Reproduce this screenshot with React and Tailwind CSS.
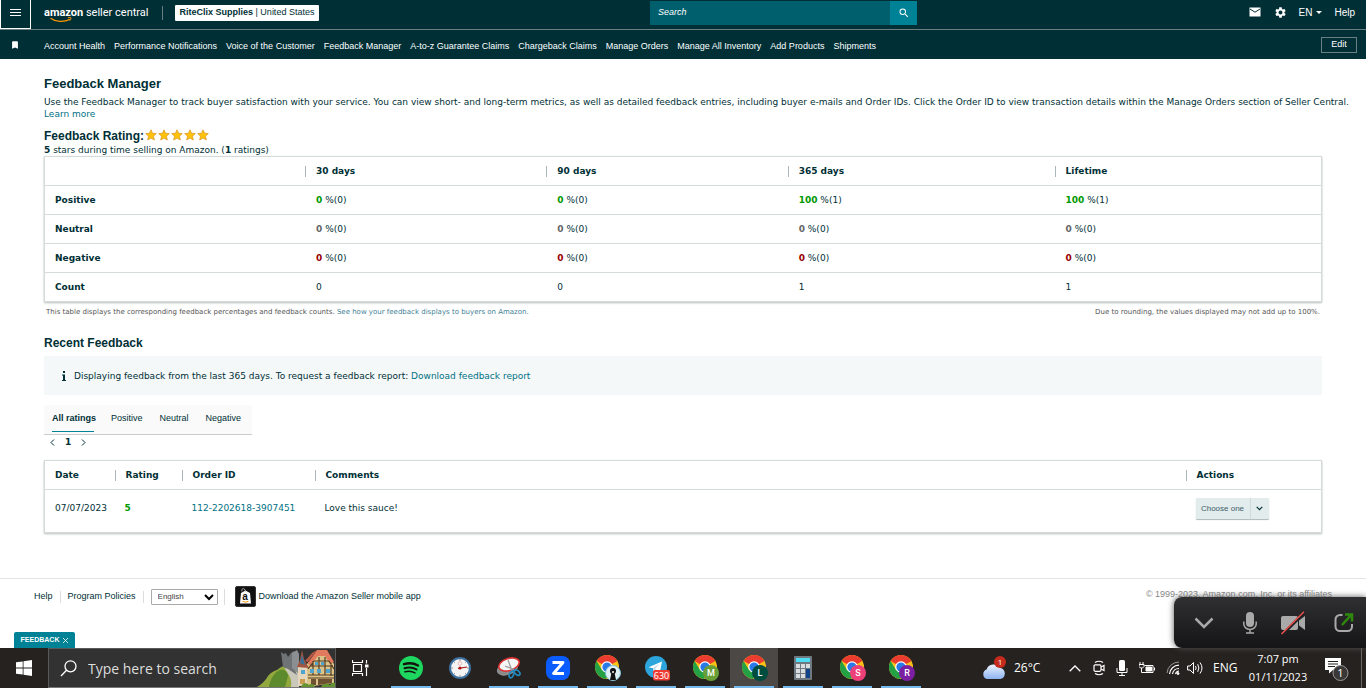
import { useState } from "react";
import { MdSettings, MdSearch, MdBookmark } from "react-icons/md";

const navLinks = [
  "Account Health",
  "Performance Notifications",
  "Voice of the Customer",
  "Feedback Manager",
  "A-to-z Guarantee Claims",
  "Chargeback Claims",
  "Manage Orders",
  "Manage All Inventory",
  "Add Products",
  "Shipments",
];

const periods = ["30 days", "90 days", "365 days", "Lifetime"];

const ratingRows = [
  { name: "Positive", color: "text-[#009900]", values: [[0, 0], [0, 0], [100, 1], [100, 1]] },
  { name: "Neutral", color: "text-[#666666]", values: [[0, 0], [0, 0], [0, 0], [0, 0]] },
  { name: "Negative", color: "text-[#990000]", values: [[0, 0], [0, 0], [0, 0], [0, 0]] },
];

const counts = [0, 0, 1, 1];
const tabs = ["All ratings", "Positive", "Neutral", "Negative"];

function Star() {
  return (
    <svg width="12" height="12" viewBox="0 0 12 12">
      <path
        d="M6 .8l1.500 3.400 3.800.4-2.800 2.600.8 3.800L6 9.100 2.700 11l.8-3.800L.7 4.600l3.800-.4z"
        fill="#ffc20a"
        stroke="#dd9c2a"
        strokeWidth=".8"
        strokeLinejoin="round"
      />
    </svg>
  );
}

function Header() {
  return (
    <header className="bg-[#002f36] text-white text-[9px]">
      <div className="flex h-[30px] items-start border-b border-[#6b7f83]">
        <button
          aria-label="Menu"
          className="flex h-[29px] w-[31px] shrink-0 items-center justify-center border border-t-0 border-white pb-[3px]"
        >
          <svg width="11" height="8" viewBox="0 0 11 8" stroke="#fff" strokeWidth="1">
            <path d="M0 .5h11M0 3.500h11M0 6.500h11" />
          </svg>
        </button>
        <a href="#" className="ml-[13px] flex h-[25px] flex-col pt-[5px] font-['Roboto',sans-serif] text-[11px] leading-[15px]">
          <span className="whitespace-nowrap">
            <b>amazon</b> seller central
          </span>
          <svg width="24" height="6" viewBox="0 0 24 6" className="-mt-[3px] ml-[6px]" fill="none" stroke="#ff9900">
            <path d="M.5 1.200C6 5.200 14 5.400 20 2.200" strokeWidth="1.300" />
            <path d="M18 .7c2-.5 3.400-.2 3 .5s-.5 1.800-1.200 2.500" strokeWidth="1" />
          </svg>
        </a>
        <span className="mt-[6px] ml-[13px] h-[14px] w-px bg-[#6b7f83]" />
        <button className="mt-[5px] ml-3 h-4 whitespace-nowrap rounded-[1px] bg-white px-[5px] text-[9px] text-[#002f36]">
          <b>RiteClix Supplies</b> | United States
        </button>
        <form className="mt-px ml-auto flex h-6 w-[267px] shrink-0">
          <input
            aria-label="Search"
            placeholder="Search"
            className="min-w-0 flex-1 bg-[#005f6d] px-2 text-[9px] italic text-white placeholder:text-white"
          />
          <button type="button" aria-label="Submit search" className="flex w-[27px] items-center justify-center bg-[#008296]">
            <MdSearch size={12} />
          </button>
        </form>
        <div className="flex h-6 w-[449px] items-center justify-end pr-[11px] text-[10px]">
          <button aria-label="Messages">
            <svg width="12" height="10" viewBox="0 0 12 10">
              <path d="M.5 .5h11v9H.5z" fill="#fff" />
              <path d="M1 2l5 3.200L11 2" fill="none" stroke="#002f36" strokeWidth="1" />
            </svg>
          </button>
          <button aria-label="Settings" className="ml-[13px]">
            <MdSettings size={13} />
          </button>
          <button className="ml-3 flex items-center gap-1">
            EN
            <svg width="6" height="3" viewBox="0 0 6 3" fill="#fff">
              <path d="M0 0h6L3 3z" />
            </svg>
          </button>
          <a href="#" className="ml-3">Help</a>
        </div>
      </div>
      <nav className="flex h-[29px] items-center pr-[9px]">
        <MdBookmark size={10} className="ml-[10px] shrink-0" />
        <div className="ml-6 flex flex-1 gap-[9px] pt-[5px] whitespace-nowrap">
          {navLinks.map((link) => (
            <a key={link} href="#">{link}</a>
          ))}
        </div>
        <button className="h-4 w-9 border border-[#6b7f83] text-[9px]">Edit</button>
      </nav>
    </header>
  );
}

function HeadCell({ children }) {
  return (
    <th className="p-0 text-left">
      <span className="block border-l border-[#aab7b8] pl-[10px] leading-[11px]">{children}</span>
    </th>
  );
}

function RatingTable() {
  return (
    <table className="w-full table-fixed border border-[#d5dbdb] shadow-[0_1px_2px_#b8bdbe]">
      <colgroup>
        <col className="w-[20.4%]" />
        <col className="w-[18.9%]" />
        <col className="w-[18.9%]" />
        <col className="w-[20.9%]" />
        <col />
      </colgroup>
      <thead>
        <tr className="h-[29px]">
          <td />
          {periods.map((p) => (
            <HeadCell key={p}>{p}</HeadCell>
          ))}
        </tr>
      </thead>
      <tbody>
        {ratingRows.map((row) => (
          <tr key={row.name} className="h-[29px] border-t border-[#d5dbdb]">
            <th className="py-0 pl-[10px] text-left">{row.name}</th>
            {row.values.map(([percent, count], i) => (
              <td key={i} className="py-0 pl-[11px]">
                <b className={row.color}>{percent}</b> %({count})
              </td>
            ))}
          </tr>
        ))}
        <tr className="h-[29px] border-t border-[#d5dbdb]">
          <th className="py-0 pl-[10px] text-left">Count</th>
          {counts.map((count, i) => (
            <td key={i} className="py-0 pl-[11px]">{count}</td>
          ))}
        </tr>
      </tbody>
    </table>
  );
}

function FeedbackTable() {
  return (
    <table className="mt-[11px] w-full table-fixed border border-[#d5dbdb] shadow-[0_1px_2px_#b8bdbe]">
      <colgroup>
        <col className="w-[70px]" />
        <col className="w-[67px]" />
        <col className="w-[133px]" />
        <col />
        <col className="w-[136px]" />
      </colgroup>
      <thead>
        <tr className="h-[29px]">
          <th className="py-0 pl-[10px] text-left">Date</th>
          <HeadCell>Rating</HeadCell>
          <HeadCell>Order ID</HeadCell>
          <HeadCell>Comments</HeadCell>
          <HeadCell>Actions</HeadCell>
        </tr>
      </thead>
      <tbody>
        <tr className="h-[43px] border-t border-[#d5dbdb] align-top">
          <td className="pt-3 pl-[10px]">07/07/2023</td>
          <td className="pt-3 pl-[10px] font-bold text-[#009900]">5</td>
          <td className="pt-3 pl-[10px]">
            <a href="#" className="text-[#007185]">112-2202618-3907451</a>
          </td>
          <td className="pt-3 pl-[10px]">Love this sauce!</td>
          <td className="pt-2 pl-[10px]">
            <button className="flex h-[21px] w-[73px] items-center rounded-[1px] bg-[#e3eced] font-['Liberation_Sans',sans-serif] text-[8px] text-[#3d6169] shadow-[0_1px_1px_#aab7b8]">
              <span className="flex-1">Choose one</span>
              <span className="flex h-full w-[19px] items-center justify-center border-l border-[#cfdadb]">
                <svg width="7" height="5" viewBox="0 0 7 5" fill="none" stroke="#002f36" strokeWidth="1.200">
                  <path d="M.7 .8l2.800 2.800L6.300 .8" />
                </svg>
              </span>
            </button>
          </td>
        </tr>
      </tbody>
    </table>
  );
}

function Footer() {
  return (
    <footer className="mt-[45px] flex h-9 items-center border-t border-[#e2e5e6] pr-[34px] pl-[34px] text-[9px] text-[#002f36]">
      <a href="#">Help</a>
      <span className="mx-[7px] h-3 w-px bg-[#dddddd]" />
      <a href="#">Program Policies</a>
      <span className="mx-[7px] h-3 w-px bg-[#dddddd]" />
      <span className="relative flex">
        <select
          aria-label="Language"
          className="h-4 w-[67px] appearance-none rounded-[1px] border border-[#aaaaaa] bg-white pl-[6px] text-[8px] text-[#444444]"
        >
          <option>English</option>
        </select>
        <svg
          width="10"
          height="7"
          viewBox="0 0 10 7"
          fill="none"
          stroke="#000"
          strokeWidth="2"
          className="pointer-events-none absolute top-[5px] right-1"
        >
          <path d="M1 1l4 4 4-4" />
        </svg>
      </span>
      <span className="ml-[6px] h-4 w-px bg-[#dddddd]" />
      <a href="#" className="ml-[10px] flex items-center gap-[3px]">
        <svg width="21" height="21" viewBox="0 0 21 21">
          <rect x=".5" y=".5" width="20" height="20" rx="1.500" fill="#111" stroke="#333" />
          <path d="M6 7l4.500-2.500L15 7l1 10.500H5z" fill="#fff" />
          <path d="M7 5.500C6 2 10 1 10.500 6" fill="none" stroke="#ccc" strokeWidth=".8" />
          <text x="7.300" y="14" fontSize="10" fontWeight="bold" fontFamily="Liberation Sans" fill="#111">a</text>
          <path d="M7.500 15.300q3 1.800 6 0" fill="none" stroke="#f90" />
        </svg>
        Download the Amazon Seller mobile app
      </a>
      <span className="ml-auto self-start pt-[9px] text-[#888888]">© 1999-2023, Amazon.com, Inc. or its affiliates</span>
    </footer>
  );
}

function CallBar() {
  return (
    <div className="absolute right-0 bottom-10 flex h-[51px] w-48 items-center rounded-l-[8px] bg-linear-to-b from-[#303032] to-[#151517] shadow-[0_0_6px_#555555]">
      <button aria-label="Collapse" className="ml-[20px]">
        <svg width="20" height="12" viewBox="0 0 20 12" fill="none" stroke="#a9a9a9" strokeWidth="2.500">
          <path d="M1.500 1.500L10 10l8.500-8.500" />
        </svg>
      </button>
      <button aria-label="Mute" className="ml-[29px]">
        <svg width="14" height="22" viewBox="0 0 14 22" fill="none" stroke="#a9a9a9">
          <rect x="3" y="0" width="8" height="15" rx="4" fill="#a9a9a9" stroke="none" />
          <path d="M.8 9.500v2.500a6.200 5.500 0 0 0 12.400 0V9.500M7 17.500V21M3 21h8" strokeWidth="1.500" />
        </svg>
      </button>
      <button aria-label="Start video" className="ml-[23px]">
        <svg width="26" height="24" viewBox="0 0 26 24">
          <rect x="1" y="5" width="17" height="14" rx="2" fill="#a9a9a9" />
          <path d="M19 9.500L25 5v14l-6-4.500z" fill="#a9a9a9" />
          <path d="M2 24L25 1" stroke="#202022" strokeWidth="3" />
          <path d="M1.500 23L24 .8" stroke="#e8504d" strokeWidth="1.600" />
        </svg>
      </button>
      <button aria-label="Pop out" className="ml-[28px]">
        <svg width="20" height="20" viewBox="0 0 20 20" fill="none" strokeWidth="2">
          <path d="M8.500 2H6a4.500 4.500 0 0 0-4.500 4.500v7A4.500 4.500 0 0 0 6 18h7.500a4.500 4.500 0 0 0 4.500-4.500V11" stroke="#a9a9a9" />
          <path d="M8 12l9.500-10.500M11 1.500h7v7" stroke="#2f8a0c" strokeWidth="2.500" />
        </svg>
      </button>
    </div>
  );
}

function ChromeIcon({ letter, color }) {
  return (
    <svg width="28" height="28" viewBox="0 0 28 28">
      <circle cx="14" cy="13" r="12" fill="#fbc116" />
      <path d="M14 13L3.600 7A12 12 0 0 1 24.400 7z" fill="#ea3d2f" />
      <path d="M3.600 7A12 12 0 0 0 13 25l5.500-9.500L9 16z" fill="#25a145" />
      <circle cx="14" cy="13" r="5.800" fill="#fff" />
      <circle cx="14" cy="13" r="4.600" fill="#2a79e8" />
      {letter ? (
        <>
          <circle cx="20" cy="19" r="8" fill={color} />
          <text x="20" y="22" textAnchor="middle" fontSize="9" fontWeight="500" fontFamily="Roboto" fill="#fff">{letter}</text>
        </>
      ) : (
        <>
          <circle cx="20" cy="19" r="7.500" fill="#dff0f7" stroke="#7fc0d8" />
          <circle cx="20" cy="17" r="3" fill="#111" />
          <path d="M18.500 18.500h3L23 26h-6z" fill="#111" />
          <circle cx="20" cy="18" r="1" fill="#fff" />
        </>
      )}
    </svg>
  );
}

function SpotifyIcon() {
  return (
    <svg width="24" height="24" viewBox="0 0 24 24" fill="none" stroke="#14140f" strokeLinecap="round">
      <circle cx="12" cy="12" r="12" fill="#1ed760" stroke="none" />
      <path d="M5 8.200c5-1.500 10-1 14 1.300" strokeWidth="2.400" />
      <path d="M5.500 12.200c4.500-1.300 8.500-.8 12 1.200" strokeWidth="2" />
      <path d="M6 15.800c3.800-1 7-.6 10 1.100" strokeWidth="1.600" />
    </svg>
  );
}

function ClockIcon() {
  return (
    <svg width="24" height="24" viewBox="0 0 24 24">
      <circle cx="12" cy="12" r="10" fill="#f4f4f4" stroke="#3d6f9f" strokeWidth="2" />
      <path d="M12 3v2M12 19v2M3 12h2M19 12h2M5.600 5.600l1.200 1.200M18.400 5.600l-1.200 1.200M5.600 18.400l1.200-1.200M18.400 18.400l-1.200-1.200" stroke="#777" strokeWidth=".8" />
      <circle cx="12" cy="7.500" r="1.800" fill="none" stroke="#e9a0a0" strokeWidth=".7" />
      <path d="M10 12.500l9-1.500" stroke="#b01010" strokeWidth="1.200" />
      <circle cx="12" cy="12" r="1.500" fill="#b01010" />
    </svg>
  );
}

function SnipIcon() {
  return (
    <svg width="26" height="24" viewBox="0 0 26 24">
      <ellipse cx="11.500" cy="12.500" rx="11" ry="6.500" transform="rotate(-20 11.500 12.500)" fill="#8c8c8c" />
      <ellipse cx="13" cy="8.500" rx="10.500" ry="6" transform="rotate(-18 13 8.500)" fill="#f5f5f5" stroke="#d33" strokeWidth="1.600" />
      <path d="M12 4l4 11M9 10l10 4" stroke="#999" strokeWidth="1.200" />
      <ellipse cx="15.500" cy="18.500" rx="2" ry="3.500" transform="rotate(25 15.500 18.500)" fill="none" stroke="#2388bd" strokeWidth="1.700" />
      <ellipse cx="21" cy="16.500" rx="2" ry="3.500" transform="rotate(-50 21 16.500)" fill="none" stroke="#2388bd" strokeWidth="1.700" />
    </svg>
  );
}

function ZoomIcon() {
  return (
    <svg width="24" height="24" viewBox="0 0 24 24">
      <rect width="24" height="24" rx="7.500" fill="#0b5cff" />
      <path d="M6.500 6.500h10.500L7.500 17.500H18" fill="none" stroke="#fff" strokeWidth="2.800" strokeLinejoin="round" />
    </svg>
  );
}

function TelegramIcon() {
  return (
    <svg width="28" height="26" viewBox="0 0 28 26">
      <circle cx="14" cy="12" r="11" fill="#2ca5dc" />
      <path d="M6.500 12.300L20 6.500l-2.200 11-4.300-3-2 2-.5-3.300z" fill="#fff" />
      <path d="M11 13.200l6.500-4.700-4.800 5.800-1.200 2.200z" fill="#b9d9ea" />
      <rect x="11" y="15" width="17" height="10.500" rx="2" fill="#ee3b32" />
      <text x="19.500" y="23.500" textAnchor="middle" fontSize="9" fontFamily="Noto Sans" fill="#fff">630</text>
    </svg>
  );
}

function CalculatorIcon() {
  return (
    <svg width="18" height="24" viewBox="0 0 18 24">
      <rect width="18" height="24" rx="1" fill="#707880" />
      <rect x="2" y="2" width="14" height="4" fill="#4fdcf5" />
      <g fill="#d9dde0">
        <rect x="2" y="8" width="4" height="4" />
        <rect x="7" y="8" width="4" height="4" />
        <rect x="12" y="8" width="4" height="4" />
        <rect x="2" y="13" width="4" height="4" />
        <rect x="7" y="13" width="4" height="4" />
        <rect x="2" y="18" width="4" height="4" />
        <rect x="7" y="18" width="4" height="4" />
      </g>
      <rect x="12" y="13" width="4" height="9" fill="#114488" />
    </svg>
  );
}

function Castle() {
  return (
    <svg width="78" height="38" viewBox="0 0 78 38">
      {/* hills and path */}
      <path d="M0 38C5 35 8 32 11 27c3-4 6-5 9-6 4-4 8-5 12-4l10 6v15z" fill="#93a83c" />
      <path d="M12 38c1-8 5-14 11-17 4-1 8 2 8 6l-3 11z" fill="#5d8a2c" />
      <path d="M28 17c-1 6 8 9 6 21h8V24z" fill="#c9c8bb" />
      {/* ruined wall */}
      <path d="M24 3l3 2 2-1 2 4 3-4 3-2v16l3 8-9-6-5-2z" fill="#707376" />
      <path d="M35 4l5-3 2 4v20l-7-6z" fill="#8c8f91" />
      {/* house */}
      <path d="M41 18h10v19H41z" fill="#e3d6bd" />
      <path d="M50 15l8-9h12l7 9v19l-27 4z" fill="#dcc389" />
      <path d="M51 14L60 1l10 0 7 12-4 2-5-8h-7l-8 10z" fill="#e27a5e" />
      <path d="M60 1l-9 12-3-1 7-8z" fill="#b85a44" />
      <path d="M40 18l3-7 2-10 2 9 5 9z" fill="#a05543" />
      <path d="M43 14l2-8 3 10z" fill="#35739c" />
      <path d="M57 12h15M53 17h23M51 26h26M56 12v14M62 8v18M68 8v18M74 14v13M51 20l6-8M77 20l-5-8M51 29h26" stroke="#533b22" strokeWidth="1.200" fill="none" />
      <path d="M58 13h3v3h-3zM64 13h3v3h-3zM53 20h4v4h-4zM60 20h4v4h-4zM69 20h4v4h-4zM44 21h4v4h-4z" fill="#4fa3cf" />
      <path d="M54 30h5v6h-5zM61 30h14v4l-14 2z" fill="#6e5130" />
      <path d="M43 30h5v5h-5z" fill="#c99c50" />
      {/* bushes */}
      <path d="M44 38c1-4 5-5 8-2 2-2 5-1 6 2zM64 38c2-4 7-4 9-2 2-2 4-3 5-2v4z" fill="#63942f" />
    </svg>
  );
}

const pinned = [
  { name: "Spotify", icon: <SpotifyIcon />, open: true },
  { name: "Clock", icon: <ClockIcon /> },
  { name: "Snipping Tool", icon: <SnipIcon />, open: true },
  { name: "Zoom", icon: <ZoomIcon />, open: true },
  { name: "Chrome", icon: <ChromeIcon />, open: true },
  { name: "Telegram", icon: <TelegramIcon />, open: true },
  { name: "Chrome M", icon: <ChromeIcon letter="M" color="#689f38" />, open: true },
  { name: "Chrome L", icon: <ChromeIcon letter="L" color="#004d40" />, open: true, active: true },
  { name: "Calculator", icon: <CalculatorIcon />, open: true },
  { name: "Chrome S", icon: <ChromeIcon letter="S" color="#ec407a" />, open: true },
  { name: "Chrome R", icon: <ChromeIcon letter="R" color="#7b1fa2" />, open: true },
];

function Tray() {
  return (
    <div className="ml-auto flex items-center">
      <svg width="28" height="26" viewBox="0 0 28 26">
        <defs>
          <linearGradient id="cloud" x1="0" y1="0" x2="0" y2="1">
            <stop offset="0" stopColor="#eef4ff" />
            <stop offset="1" stopColor="#8db4f0" />
          </linearGradient>
        </defs>
        <path d="M6 24a5 5 0 0 1-.5-9.500A7.500 7.500 0 0 1 19 13a5.600 5.600 0 0 1 .5 11z" fill="url(#cloud)" />
        <circle cx="19" cy="7" r="6" fill="#c42b1c" />
        <text x="19" y="10" textAnchor="middle" fontSize="8" fontFamily="Open Sans" fill="#fff">1</text>
      </svg>
      <span className="ml-[5px] w-[30px] whitespace-nowrap text-[12px]">26°C</span>
      <svg width="12" height="7" viewBox="0 0 12 7" fill="none" stroke="#fff" strokeWidth="1.300" className="ml-[25px]">
        <path d="M.7 6.300L6 1l5.300 5.300" />
      </svg>
      <svg width="12" height="16" viewBox="0 0 12 16" fill="none" stroke="#fff" strokeWidth="1.200" className="ml-3">
        <rect x="1" y="4.800" width="7" height="6.500" rx="1.200" />
        <path d="M8 7l3-1.500v5L8 9M2 2.500q4-2.500 8 0M2 13.500q4 2.500 8 0" />
      </svg>
      <svg width="12" height="16" viewBox="0 0 12 16" fill="none" stroke="#fff" className="ml-[11px]">
        <rect x="3" y="0" width="6" height="11" rx="1.500" fill="#fff" stroke="none" />
        <path d="M1 8v4.500h10V8M6 12.500V16M3 15.500h6" />
      </svg>
      <svg width="16" height="14" viewBox="0 0 16 14" fill="none" stroke="#fff" className="ml-[11px]">
        <path d="M5.500 4.500h8.500v7H4M15.500 6.500v3" />
        <path d="M7 6h5.500v4H7z" fill="#fff" />
        <path d="M1 1v3M4 1v3M0 3.500h5v2L3.500 7h-2L0 5.500zM2.500 7v4.500H4" />
      </svg>
      <svg width="14" height="14" viewBox="0 0 14 14" fill="none" stroke="#fff" className="ml-[11px]">
        <path d="M1 12A12 12 0 0 1 13 1" stroke="#999" />
        <path d="M3.500 13A9.500 9.500 0 0 1 13 4.200M6.500 13A6.500 6.500 0 0 1 13 7.500M9.500 13A4 4 0 0 1 13 10" strokeWidth="1.200" />
        <circle cx="12" cy="12.500" r="1" fill="#fff" />
      </svg>
      <svg width="17" height="14" viewBox="0 0 17 14" fill="none" stroke="#fff" className="ml-[7px]">
        <path d="M.6 5h2.400L6.500 1.500v11L3 9H.6z" />
        <path d="M8.500 5q1.200 2 0 4M10.700 3.200q2.400 3.800 0 7.600M13 1.500q4 5.500 0 11" />
      </svg>
      <span className="ml-[9px] w-6 text-[12px]">ENG</span>
      <div className="ml-[10px] w-[62px] text-center text-[11px] leading-[18px] whitespace-nowrap">
        <div>7:07 pm</div>
        <div>01/11/2023</div>
      </div>
      <svg width="26" height="26" viewBox="0 0 26 26" className="ml-[15px]">
        <path d="M1 3h16v12H9l-4 3.500V15H1z" fill="#fff" />
        <path d="M4 6.500h10M4 9h10M4 11.500h7" stroke="#26221f" />
        <circle cx="16.500" cy="18" r="7.500" fill="#3a3836" stroke="#999" />
        <text x="16.500" y="22" textAnchor="middle" fontSize="11" fontFamily="Open Sans" fill="#fff">1</text>
      </svg>
      <span className="mr-1 ml-[11px] h-10 w-px bg-[#6a6866]" />
    </div>
  );
}

function Taskbar() {
  return (
    <div className="flex h-10 bg-[#26221f] font-['Open_Sans',sans-serif] text-white">
      <button aria-label="Start" className="flex w-12 items-center justify-center">
        <svg width="16" height="16" viewBox="0 0 16 16" fill="#fff">
          <path d="M0 2.300l6.700-.9v6.200H0zM7.500 1.300L16 0v7.600H7.500zM0 8.400h6.700v6.200L0 13.700zM7.500 8.400H16V16l-8.500-1.300z" />
        </svg>
      </button>
      <label className="flex w-72 items-center border border-[#5a5a5a] border-b-[#777777] bg-[#323232] pl-[11px]">
        <svg width="17" height="17" viewBox="0 0 17 17" fill="none" stroke="#fff" strokeWidth="1.300">
          <circle cx="10.500" cy="6.300" r="5.500" />
          <path d="M6.500 10.300L1 16" />
        </svg>
        <input
          aria-label="Type here to search"
          placeholder="Type here to search"
          className="ml-[11px] min-w-0 flex-1 bg-transparent text-[14px] placeholder:text-[#dddddd]"
        />
        <Castle />
      </label>
      <button aria-label="Task view" className="flex w-12 items-center justify-center">
        <svg width="17" height="16" viewBox="0 0 17 16" fill="none" stroke="#fff">
          <path d="M.5 0v2.500h10V0M.5 16v-2.500h10V16M1.500 4.500h8v7h-8zM14.500 0v3.500M14.500 8v8" strokeWidth="1.200" />
          <path d="M13 4.500h3.500v3H13z" fill="#fff" stroke="none" />
        </svg>
      </button>
      <div className="ml-[3px] flex gap-px">
        {pinned.map((app) => (
          <button
            key={app.name}
            aria-label={app.name}
            className={
              app.active
                ? "flex w-12 flex-col items-center bg-[#4b4846]"
                : "flex w-12 flex-col items-center"
            }
          >
            <span className="flex flex-1 items-center justify-center pt-[2px]">{app.icon}</span>
            <span className={app.open ? "h-[2px] w-10 bg-[#76b9ed]" : "h-[2px] w-10"} />
          </button>
        ))}
      </div>
      <Tray />
    </div>
  );
}

export default function App() {
  const [tab, setTab] = useState("All ratings");

  return (
    <div className="relative flex min-h-screen flex-col overflow-hidden bg-white font-['Liberation_Sans',Arial,sans-serif]">
      <Header />
      <main className="mx-11 pt-[17px] font-['DejaVu_Sans',Verdana,sans-serif] text-[9px] leading-3 text-[#002f36]">
        <h1 className="font-['Liberation_Sans',sans-serif] text-[13px] leading-4 font-bold">Feedback Manager</h1>
        <p className="mt-1 whitespace-nowrap">
          Use the Feedback Manager to track buyer satisfaction with your service. You can view short- and long-term
          metrics, as well as detailed feedback entries, including buyer e-mails and Order IDs. Click the Order ID to
          view transaction details within the Manage Orders section of Seller Central.
          <br />
          <a href="#" className="text-[#007185]">Learn more</a>
        </p>
        <div className="mt-2 flex items-center">
          <h2 className="font-['Liberation_Sans',sans-serif] text-[12px] leading-4 font-bold">Feedback Rating:</h2>
          <span className="flex gap-px pb-[2px] pl-px">
            {[1, 2, 3, 4, 5].map((n) => (
              <Star key={n} />
            ))}
          </span>
        </div>
        <p>
          <b>5</b> stars during time selling on Amazon. (<b>1</b> ratings)
        </p>
        <RatingTable />
        <div className="mt-1 flex justify-between px-[2px] text-[7px] text-[#555555]">
          <p>
            This table displays the corresponding feedback percentages and feedback counts.{" "}
            <a href="#" className="text-[#3f7f95]">See how your feedback displays to buyers on Amazon.</a>
          </p>
          <p>Due to rounding, the values displayed may not add up to 100%.</p>
        </div>

        <h2 className="mt-[17px] font-['Liberation_Sans',sans-serif] text-[12px] leading-4 font-bold">Recent Feedback</h2>
        <div className="mt-[5px] flex h-[39px] items-center bg-[#f4f8f9] pl-[18px]">
          <svg width="4" height="10" viewBox="0 0 4 10" fill="#002f36" className="mr-2">
            <path d="M1 0h2v2H1zM0 3.500h3V9h1v1H0V9h1V4.500H0z" />
          </svg>
          <p>
            Displaying feedback from the last 365 days. To request a feedback report:{" "}
            <a href="#" className="text-[#007185]">Download feedback report</a>
          </p>
        </div>

        <div className="mt-[10px] flex h-[30px] w-[208px] gap-[17px] border-b border-[#c8cccc] bg-[#fafafa] pl-2 font-['Liberation_Sans',sans-serif]">
          {tabs.map((t) => (
            <button
              key={t}
              onClick={() => setTab(t)}
              className={
                t === tab
                  ? "h-[27px] w-[42px] border-b border-[#008296] text-left font-bold whitespace-nowrap"
                  : "h-[27px] border-b border-transparent"
              }
            >
              {t}
            </button>
          ))}
        </div>
        <div className="flex h-[14px] items-center gap-[10px] pl-[6px]">
          <button aria-label="Previous page">
            <svg width="5" height="7" viewBox="0 0 5 7" fill="none" stroke="#002f36">
              <path d="M4 .5l-3 3 3 3" />
            </svg>
          </button>
          <b>1</b>
          <button aria-label="Next page">
            <svg width="5" height="7" viewBox="0 0 5 7" fill="none" stroke="#002f36">
              <path d="M1 .5l3 3-3 3" />
            </svg>
          </button>
        </div>
        <FeedbackTable />
      </main>
      <Footer />
      <button className="mt-auto ml-[14px] flex h-4 w-[61px] items-center justify-center gap-1 rounded-t-[2px] bg-[#008296] text-[7px] font-bold text-white">
        FEEDBACK
        <svg width="5" height="5" viewBox="0 0 5 5" stroke="#fff" strokeWidth=".8">
          <path d="M0 0l5 5M5 0L0 5" />
        </svg>
      </button>
      <Taskbar />
      <CallBar />
    </div>
  );
}
